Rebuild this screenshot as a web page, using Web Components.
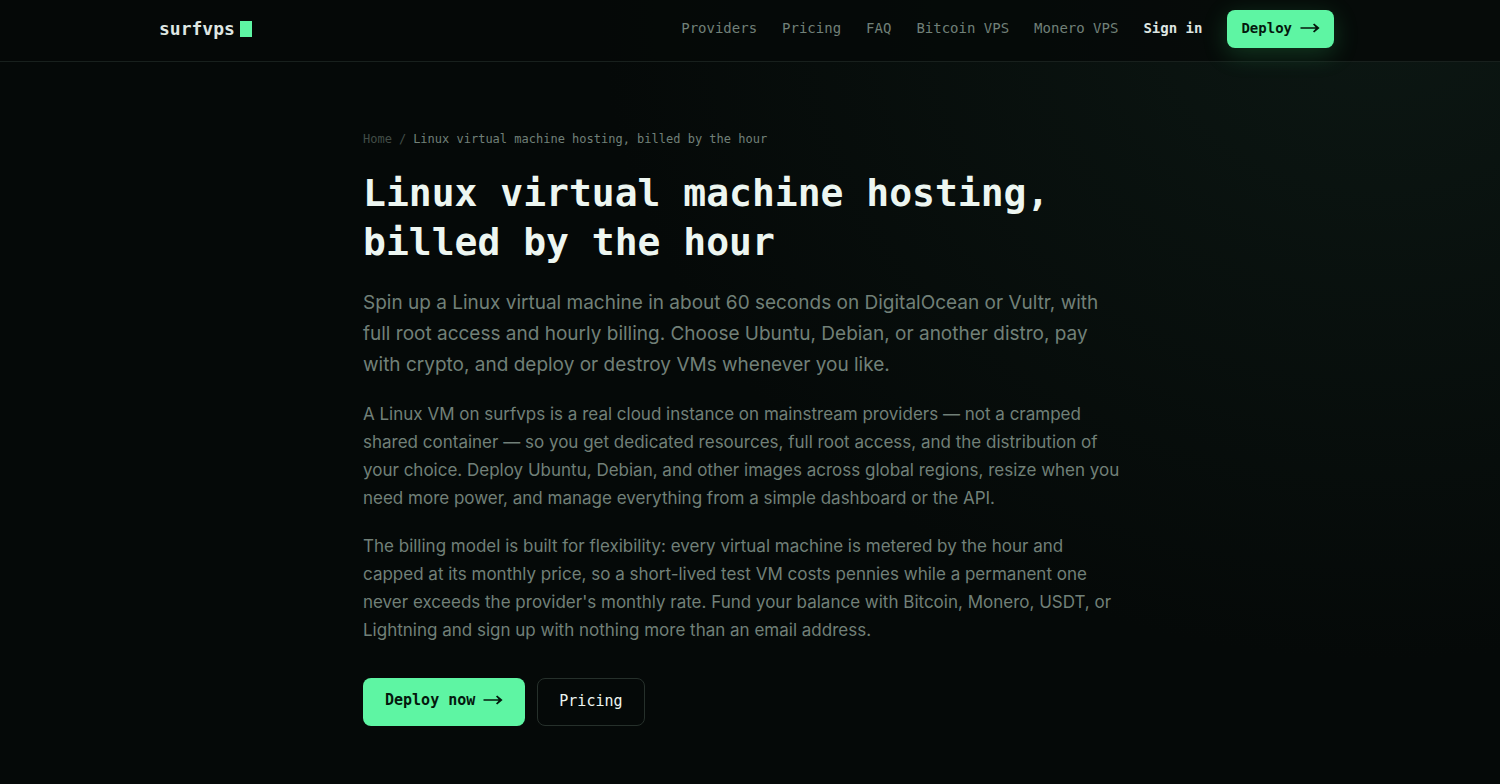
<!DOCTYPE html>
<html lang="en">
<head>
<meta charset="utf-8">
<meta name="viewport" content="width=device-width, initial-scale=1">
<title>Linux virtual machine hosting, billed by the hour</title>
<style>
  :root {
    --bg: #050908;
    --line: #18201d;
    --green: #5ef5a3;
    --ink: #04180d;
    --text: #edf6f1;
    --muted: #718078;
    --faint: #424d47;
    --mono: "DejaVu Sans Mono", monospace;
    --sans: "Inter", sans-serif;
  }
  html { background: var(--bg); }
  body { margin: 0; font-family: var(--sans); color: var(--text); }
</style>
</head>
<body>
<surf-page>
  <surf-header slot="header">
    <surf-nav-link href="#providers">Providers</surf-nav-link>
    <surf-nav-link href="#pricing">Pricing</surf-nav-link>
    <surf-nav-link href="#faq">FAQ</surf-nav-link>
    <surf-nav-link href="#bitcoin">Bitcoin VPS</surf-nav-link>
    <surf-nav-link href="#monero">Monero VPS</surf-nav-link>
    <surf-nav-link href="#signin" strong>Sign in</surf-nav-link>
    <surf-button href="#deploy" size="small" arrow>Deploy</surf-button>
  </surf-header>
  <surf-article>
    <span slot="crumb">Linux virtual machine hosting, billed by the hour</span>
    <span slot="title">Linux virtual machine hosting, billed by the hour</span>
    <span slot="lead">Spin up a Linux virtual machine in about 60 seconds on DigitalOcean or Vultr, with full root access and hourly billing. Choose Ubuntu, Debian, or another distro, pay with crypto, and deploy or destroy VMs whenever you like.</span>
    <surf-paragraph>A Linux VM on surfvps is a real cloud instance on mainstream providers — not a cramped shared container — so you get dedicated resources, full root access, and the distribution of your choice. Deploy Ubuntu, Debian, and other images across global regions, resize when you need more power, and manage everything from a simple dashboard or the API.</surf-paragraph>
    <surf-paragraph>The billing model is built for flexibility: every virtual machine is metered by the hour and capped at its monthly price, so a short-lived test VM costs pennies while a permanent one never exceeds the provider's monthly rate. Fund your balance with Bitcoin, Monero, USDT, or Lightning and sign up with nothing more than an email address.</surf-paragraph>
    <surf-button slot="actions" href="#deploy" arrow>Deploy now</surf-button>
    <surf-button slot="actions" href="#pricing" variant="outline">Pricing</surf-button>
  </surf-article>
</surf-page>

<script>
const define = (name, html) => {
  const template = document.createElement('template');
  template.innerHTML = html;
  customElements.define(name, class extends HTMLElement {
    constructor() {
      super();
      this.attachShadow({ mode: 'open' }).append(template.content.cloneNode(true));
    }
    connectedCallback() {
      const link = this.shadowRoot.querySelector('a[data-link]');
      if (link) link.href = this.getAttribute('href') || '#';
    }
  });
};

define('surf-page', `
  <style>
    :host {
      display: block; min-height: 100vh; box-sizing: border-box;
      background: radial-gradient(ellipse 780px 660px at 92% 0, #0c1713, #050908) no-repeat;
    }
  </style>
  <slot name="header"></slot>
  <main><slot></slot></main>`);

define('surf-header', `
  <style>
    :host { display: block; border-bottom: 1px solid var(--line); background: rgba(5, 9, 8, .8); }
    .bar {
      display: flex; align-items: center; justify-content: space-between;
      max-width: 1175px; margin: 0 auto; padding: 10px 7px 13px 0;
    }
    .logo {
      display: flex; align-items: center; gap: 5px; text-decoration: none;
      color: #dfe6e2; font: bold 18px/24px var(--mono);
    }
    .cursor { width: 12px; height: 16px; background: var(--green); }
    nav { display: flex; align-items: center; gap: 25px; }
  </style>
  <div class="bar">
    <a class="logo" href="#home">surfvps<span class="cursor"></span></a>
    <nav aria-label="Main"><slot></slot></nav>
  </div>`);

define('surf-nav-link', `
  <style>
    :host { display: block; padding-bottom: 2px; }
    a { display: block; color: var(--muted); text-decoration: none; font: 14px/20px var(--mono); white-space: nowrap; }
    :host([strong]) a { color: #dde5e1; font-weight: bold; }
  </style>
  <a data-link><slot></slot></a>`);

define('surf-button', `
  <style>
    :host { display: block; }
    a {
      display: flex; align-items: center; gap: 8px; box-sizing: border-box;
      height: 48px; padding: 0 22px 4px; border-radius: 8px;
      background: var(--green); color: var(--ink); text-decoration: none;
      font: bold 15px/20px var(--mono); white-space: nowrap;
    }
    .arrow { display: none; width: 20px; height: 12px; }
    :host([arrow]) .arrow { display: block; }
    :host([size="small"]) a {
      height: 38px; padding: 0 14px 2px; font-size: 14px;
      box-shadow: 0 6px 24px rgba(60, 220, 120, .22);
    }
    :host([variant="outline"]) a {
      background: none; border: 1px solid #26302b; padding: 0 21px 2px;
      color: var(--text); font-weight: normal;
    }
  </style>
  <a data-link><slot></slot><svg class="arrow" viewBox="0 0 20 12" aria-hidden="true">
    <path d="M0.5 5.2H15.6L13 2.4L14.2 1.4L19.6 6L14.2 10.6L13 9.6L15.6 6.8H0.5Z" fill="currentColor"/>
  </svg></a>`);

define('surf-paragraph', `
  <style>
    :host { display: block; }
    p { margin: 0 0 20px; color: var(--muted); font: 17px/28px var(--sans); }
  </style>
  <p><slot></slot></p>`);

define('surf-article', `
  <style>
    :host { display: block; padding: 67px 11px 58px 0; }
    article { max-width: 763px; margin: 0 auto; }
    .crumbs { display: flex; gap: 7px; color: var(--faint); font: 12px/20px var(--mono); }
    .crumbs a { color: inherit; text-decoration: none; }
    .here { color: var(--muted); }
    h1 { margin: 20px 0; font: bold 38px/49px var(--mono); color: var(--text); }
    .lead { margin: 0 0 20px; color: var(--muted); font: 19px/31px var(--sans); }
    .actions { display: flex; flex-wrap: wrap; gap: 12px; padding-top: 14px; }
  </style>
  <article>
    <nav class="crumbs" aria-label="Breadcrumb">
      <a href="#home">Home</a><span>/</span><span class="here"><slot name="crumb"></slot></span>
    </nav>
    <h1><slot name="title"></slot></h1>
    <p class="lead"><slot name="lead"></slot></p>
    <slot></slot>
    <div class="actions"><slot name="actions"></slot></div>
  </article>`);
</script>
</body>
</html>
